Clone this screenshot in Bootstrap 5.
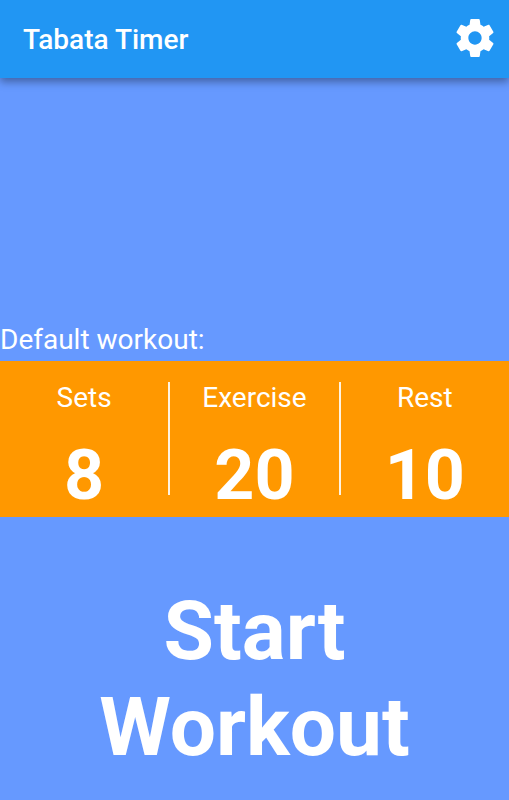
<!DOCTYPE html>
<html lang="en">
<head>
<meta charset="utf-8">
<meta name="viewport" content="width=device-width, initial-scale=1">
<title>Tabata Timer</title>
<link href="https://cdn.jsdelivr.net/npm/bootstrap@5.3.0/dist/css/bootstrap.min.css" rel="stylesheet">
<style>
body { font-family: Roboto, sans-serif; background: #6699ff; color: #fff; }
.app-bar { background: #2196f3; padding: 19px 15px 17px 23px; box-shadow: 0 4px 8px rgba(0,0,0,.35); }
.app-title { font-size: 28px; font-weight: 500; line-height: 42px; }
.gear { width: 38px; height: 38px; }
.intro { font-size: 28px; line-height: 32px; padding-bottom: 5px; }
.upper { min-height: 283px; }
.stats { background: #ff9800; padding: 21px 0 22px; }
.stat + .stat { border-left: 2px solid #fff3e0; }
.stat-label { font-size: 28px; line-height: 32px; }
.stat-value { font-size: 70px; font-weight: 700; line-height: 40px; margin-top: 41px; }
.start { font-size: 82px; font-weight: 700; line-height: 96px; color: #fff; padding: 40px 0 0; }
.start:hover, .start:active { color: #fff; }
</style>
</head>
<body class="min-vh-100 d-flex flex-column">
<header class="app-bar d-flex align-items-start justify-content-between">
<h1 class="app-title m-0">Tabata Timer</h1>
<button class="btn p-0 border-0 d-flex text-white" type="button" aria-label="Settings">
<svg class="gear" viewBox="2 2 20 20" fill="currentColor" aria-hidden="true"><path d="M19.43 12.98c.04-.32.07-.64.07-.98s-.03-.66-.07-.98l2.11-1.65c.19-.15.24-.42.12-.64l-2-3.46c-.12-.22-.39-.3-.61-.22l-2.49 1c-.52-.4-1.08-.73-1.69-.98l-.38-2.65C14.46 2.18 14.25 2 14 2h-4c-.25 0-.46.18-.49.42l-.38 2.65c-.61.25-1.17.59-1.69.98l-2.49-1c-.23-.09-.49 0-.61.22l-2 3.46c-.13.22-.07.49.12.64l2.11 1.65c-.04.32-.07.65-.07.98s.03.66.07.98l-2.11 1.65c-.19.15-.24.42-.12.64l2 3.46c.12.22.39.3.61.22l2.49-1c.52.4 1.08.73 1.69.98l.38 2.65c.03.24.24.42.49.42h4c.25 0 .46-.18.49-.42l.38-2.65c.61-.25 1.17-.59 1.69-.98l2.49 1c.23.09.49 0 .61-.22l2-3.46c.12-.22.07-.49-.12-.64l-2.11-1.65zM12 15.5c-1.93 0-3.5-1.57-3.5-3.5s1.57-3.5 3.5-3.5 3.5 1.57 3.5 3.5-1.57 3.5-3.5 3.5z"/></svg>
</button>
</header>
<main class="flex-grow-1 d-flex flex-column">
<div class="upper d-flex align-items-end"><p class="intro m-0">Default workout:</p></div>
<section class="stats row g-0 text-center" aria-label="Default workout">
<div class="stat col"><div class="stat-label">Sets</div><div class="stat-value">8</div></div>
<div class="stat col"><div class="stat-label">Exercise</div><div class="stat-value">20</div></div>
<div class="stat col"><div class="stat-label">Rest</div><div class="stat-value">10</div></div>
</section>
<button class="start btn flex-grow-1 rounded-0 border-0" type="button">Start<br>Workout</button>
</main>
<script src="https://cdn.jsdelivr.net/npm/bootstrap@5.3.0/dist/js/bootstrap.bundle.min.js"></script>
</body>
</html>
